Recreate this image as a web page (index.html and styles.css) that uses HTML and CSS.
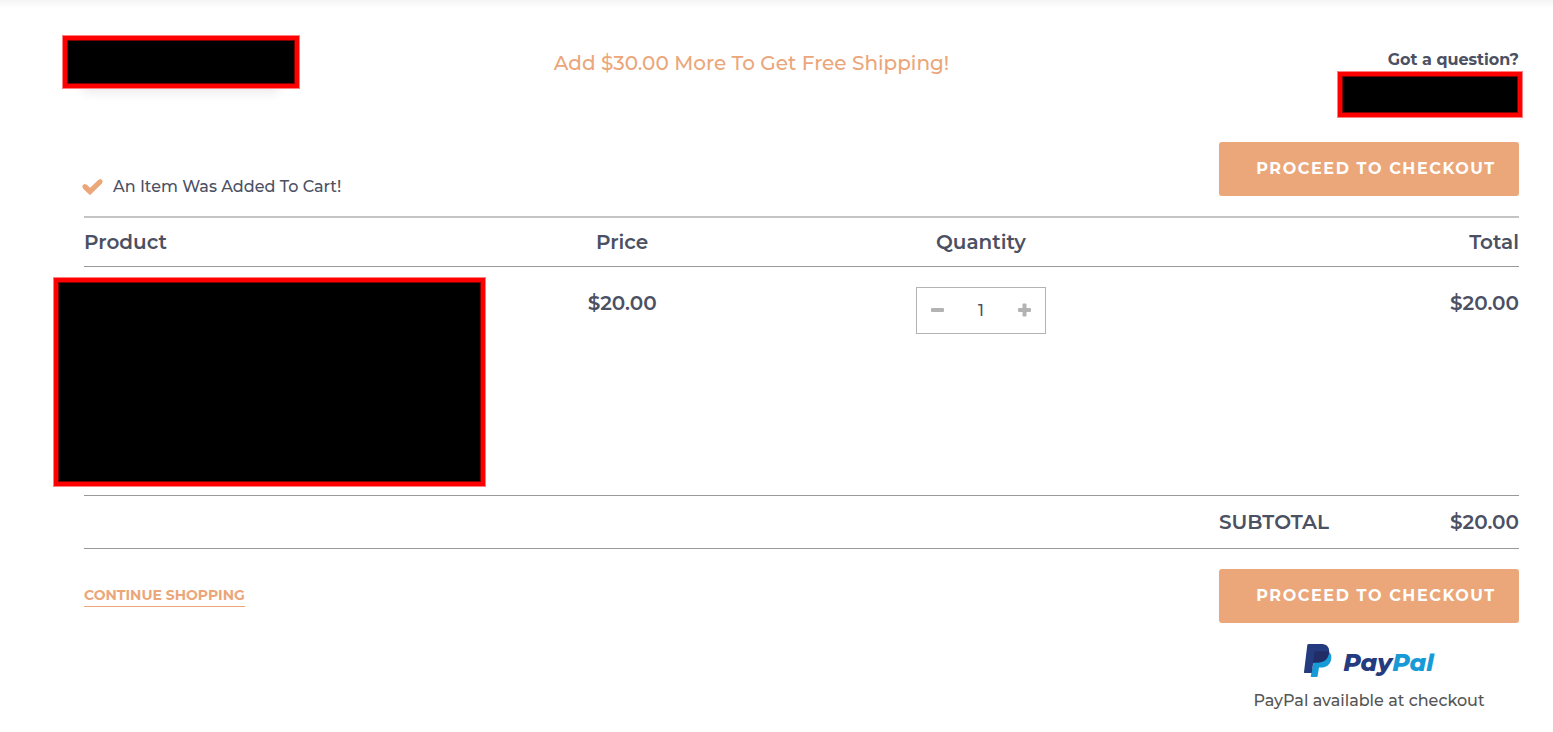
FILE: index.html
```html
<!DOCTYPE html>
<html lang="en">
<head>
<meta charset="utf-8">
<meta name="viewport" content="width=device-width, initial-scale=1">
<title>Shopping Cart</title>
<link rel="stylesheet" href="styles.css">
</head>
<body>
<header class="site-header">
  <div class="header-side"><div class="redacted redacted-logo"></div></div>
  <p class="shipping-note">Add $30.00 More To Get Free Shipping!</p>
  <div class="header-side header-help">
    <p class="question">Got a question?</p>
    <div class="redacted redacted-contact"></div>
  </div>
</header>
<main class="cart">
  <div class="cart-top">
    <p class="added">
      <svg class="check" viewBox="0 0 21 16" aria-hidden="true"><path d="M2.700 7.500L8 12.500L18.300 2.500" fill="none" stroke="currentColor" stroke-width="5.200" stroke-linejoin="miter"/><path d="M2.700 7.500L8 12.500L18.300 2.500" fill="none" stroke="currentColor" stroke-width="4.500" stroke-linecap="round"/></svg>
      An Item Was Added To Cart!
    </p>
    <button class="checkout" type="button">PROCEED TO CHECKOUT</button>
  </div>
  <table class="items">
    <thead>
      <tr><th class="product">Product</th><th>Price</th><th>Quantity</th><th class="total">Total</th></tr>
    </thead>
    <tbody>
      <tr>
        <td class="product"><div class="redacted redacted-product"></div></td>
        <td class="amount">$20.00</td>
        <td>
          <div class="stepper">
            <button type="button" aria-label="Decrease quantity"><svg viewBox="0 0 14 14" aria-hidden="true"><rect y="5" width="13" height="4" rx="1"/></svg></button>
            <input type="text" value="1" aria-label="Quantity">
            <button type="button" aria-label="Increase quantity"><svg viewBox="0 0 14 14" aria-hidden="true"><rect x="1" y="5" width="13" height="4" rx="1"/><rect x="5.500" y="0.500" width="4" height="13" rx="1"/></svg></button>
          </div>
        </td>
        <td class="amount total">$20.00</td>
      </tr>
    </tbody>
    <tfoot>
      <tr><td colspan="4"><div class="subtotal"><span>SUBTOTAL</span><span>$20.00</span></div></td></tr>
    </tfoot>
  </table>
  <div class="cart-bottom">
    <a class="continue" href="#">CONTINUE SHOPPING</a>
    <div class="pay">
      <button class="checkout" type="button">PROCEED TO CHECKOUT</button>
      <div class="paypal">
        <svg class="paypal-mark" viewBox="0 0 28 33" aria-hidden="true">
          <path d="M12 7h12c3 2 4 5 3 9-1 5-5 7.500-10 7.500h-2l-1.400 8.700q-.1.800-1 .8H7.500q-.9 0-.8-.8z" fill="#179bd7"/>
          <path d="M4.500 0H17c6 0 9 3.500 8 9-1.300 6.500-5 9.400-11 9.400h-3.200q-1.400 0-1.700 1.400L7.800 29H.8q-.9 0-.8-.9L3.300 1.100Q3.500 0 4.500 0z" fill="#253b80"/>
          <path d="M11.200 7.200h12.800q1.200.2 1 1.600c-1.300 6.600-5 9.600-11 9.600h-3.200q-1 0-1.700 1l1.200-11q.2-1 .9-1.200z" fill="#222d65"/>
        </svg>
        <span class="paypal-word">Pay<span class="pal">Pal</span></span>
      </div>
      <p class="paypal-note">PayPal available at checkout</p>
    </div>
  </div>
</main>
</body>
</html>
```
FILE: styles.css
```css
* { box-sizing: border-box; }
body {
  margin: 0;
  background: #fff linear-gradient(#f4f4f4, #fff) no-repeat 0 0 / 100% 8px;
  color: #4b5063;
  font: 500 16px/24px Montserrat, Inter, sans-serif;
}
p { margin: 0; }
button, input { font: inherit; color: inherit; }
.site-header {
  display: flex;
  align-items: flex-start;
  justify-content: space-between;
  padding: 35px 30px 0 62px;
}
.header-side { flex: 1; }
.header-help {
  display: flex;
  flex-direction: column;
  align-items: flex-end;
  padding-top: 12px;
}
.redacted {
  background: #000;
  border: 4px solid #f00;
  outline: 1px solid #ff8080;
  box-shadow: inset 0 0 0 1px #800000;
  margin: 1px;
}
.redacted-logo {
  width: 236px;
  height: 52px;
  box-shadow: inset 0 0 0 1px #800000, 0 24px 12px -20px #00000018;
}
.redacted-contact { width: 184px; height: 45px; }
.redacted-product {
  width: calc(100% + 72px);
  height: 208px;
  margin: 0 0 0 -30px;
}
.shipping-note {
  color: #eba67a;
  font-size: 20px;
  line-height: 28px;
  padding: 14px 82px 0 0;
}
.question {
  padding: 2px 4px 0 0;
  font-weight: 700;
  line-height: 22px;
}
.cart { padding: 24px 34px 20px 84px; }
.cart-top {
  display: flex;
  align-items: flex-end;
  justify-content: space-between;
  padding-bottom: 20px;
}
.added {
  display: flex;
  align-items: center;
  gap: 10px;
  margin: 0 0 -3px -2px;
}
.check { width: 21px; height: 16px; color: #eba67a; }
.checkout {
  width: 300px;
  height: 54px;
  padding: 0 22px 0 36px;
  border: 0;
  border-radius: 3px;
  background: #eba67a;
  color: #fff;
  font-weight: 700;
  letter-spacing: 0.1em;
  white-space: nowrap;
}
.items {
  width: 100%;
  table-layout: fixed;
  border-collapse: separate;
  border-spacing: 0;
  border-top: 2px solid #c4c4c4;
  font-size: 20px;
  text-align: center;
}
th, td {
  padding: 12px 0;
  border-bottom: 1px solid #999;
  font-weight: 600;
}
tbody td { padding: 11px 0 9px; vertical-align: top; }
.amount { padding-top: 24px; }
.product { text-align: left; }
.total { text-align: right; }
.stepper {
  display: flex;
  width: 130px;
  height: 47px;
  margin: 9px auto 0;
  border: 1px solid #b3b3b3;
}
.stepper button {
  width: 42px;
  padding: 0 0 2px;
  border: 0;
  background: none;
}
.stepper svg { display: block; width: 14px; height: 14px; margin: auto; fill: #b3b3b3; }
.stepper input {
  flex: 1;
  min-width: 0;
  padding: 0;
  border: 0;
  background: none;
  font-size: 16px;
  font-weight: 500;
  text-align: center;
}
.subtotal {
  display: flex;
  justify-content: space-between;
  width: 300px;
  margin-left: auto;
  padding: 2px 0;
}
.cart-bottom {
  display: flex;
  align-items: flex-start;
  justify-content: space-between;
  padding-top: 20px;
}
.continue {
  margin-top: 16px;
  border-bottom: 1px solid #eba67a;
  color: #eba67a;
  font-size: 14px;
  font-weight: 700;
  line-height: 21px;
  text-decoration: none;
}
.pay { width: 300px; text-align: center; }
.paypal {
  display: flex;
  justify-content: center;
  gap: 11px;
  margin: 21px 0 12px;
}
.paypal-mark { width: 28px; height: 33px; }
.paypal-word {
  color: #253b80;
  font: italic 800 24px/37px Montserrat, Lato, sans-serif;
  height: 33px;
}
.pal { color: #179bd7; }
.paypal-note { color: #555; }
```
